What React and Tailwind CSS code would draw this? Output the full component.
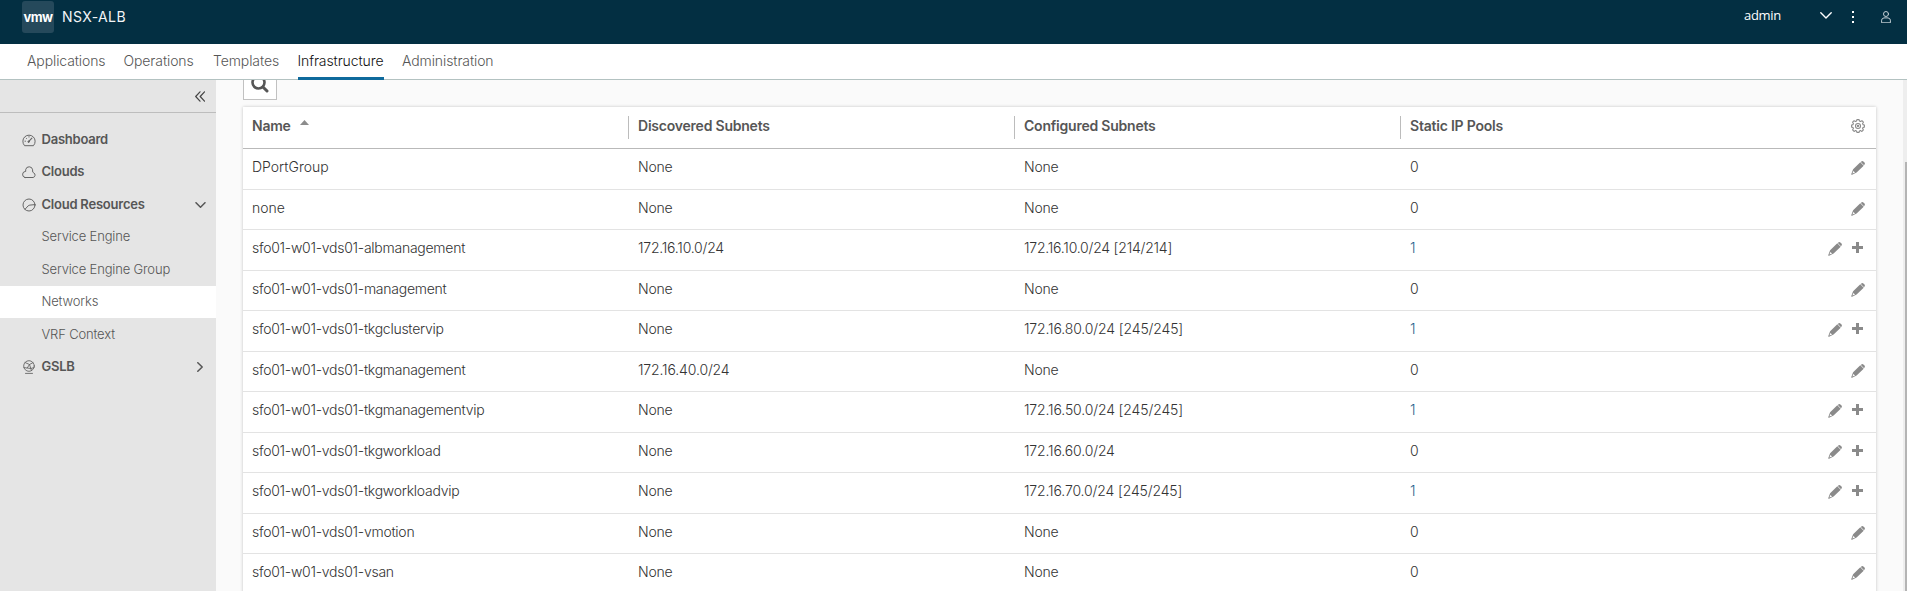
const NAV = [
  { label: 'Applications', width: 'w-[78px]' },
  { label: 'Operations', width: 'w-[71px]' },
  { label: 'Templates', width: 'w-[66px]' },
  { label: 'Infrastructure', width: 'w-[86px]', active: true },
  { label: 'Administration', width: 'w-[92px]' },
];

const ROWS = [
  ['DPortGroup', 'None', 'None', '0', false],
  ['none', 'None', 'None', '0', false],
  ['sfo01-w01-vds01-albmanagement', '172.16.10.0/24', '172.16.10.0/24 [214/214]', '1', true],
  ['sfo01-w01-vds01-management', 'None', 'None', '0', false],
  ['sfo01-w01-vds01-tkgclustervip', 'None', '172.16.80.0/24 [245/245]', '1', true],
  ['sfo01-w01-vds01-tkgmanagement', '172.16.40.0/24', 'None', '0', false],
  ['sfo01-w01-vds01-tkgmanagementvip', 'None', '172.16.50.0/24 [245/245]', '1', true],
  ['sfo01-w01-vds01-tkgworkload', 'None', '172.16.60.0/24', '0', true],
  ['sfo01-w01-vds01-tkgworkloadvip', 'None', '172.16.70.0/24 [245/245]', '1', true],
  ['sfo01-w01-vds01-vmotion', 'None', 'None', '0', false],
  ['sfo01-w01-vds01-vsan', 'None', 'None', '0', false],
];

const HEADERS = ['Discovered Subnets', 'Configured Subnets', 'Static IP Pools'];

function Stroke({ className, viewBox = '0 0 14 14', width = 1, children }) {
  return (
    <svg className={className} viewBox={viewBox} fill="none" stroke="currentColor" strokeWidth={width} strokeLinecap="round" strokeLinejoin="round">
      {children}
    </svg>
  );
}

const DashboardIcon = () => (
  <Stroke className="h-3.5 w-3.5">
    <path d="M2.3 12.4A6.2 6.2 0 1 1 11.7 12.4Z" />
    <path d="M6.6 8.7 9.9 5.2" strokeWidth="1.2" />
    <circle cx="6.6" cy="8.7" r="0.7" fill="currentColor" />
    <path d="M7 3.6v.5M3 8.2h.5M4.2 5.2l.3.3" />
  </Stroke>
);
const CloudIcon = () => (
  <Stroke className="h-3.5 w-3.5">
    <path d="M2.9 12.5H11.1A2.5 2.5 0 0 0 11.8 7.9 1.8 1.8 0 0 1 10.6 6V4.8A3.5 3.5 0 0 0 3.7 4.6V6.4A3.1 3.1 0 0 0 2.9 12.5Z" />
  </Stroke>
);
const ResourcesIcon = () => (
  <Stroke className="h-3.5 w-3.5">
    <circle cx="7" cy="7" r="6" />
    <path d="M3 11.3 6 8Q6.8 7.2 7.9 7.1L13 6.6" />
  </Stroke>
);
const GlobeIcon = () => (
  <Stroke className="h-3.5 w-3.5" width={0.9}>
    <circle cx="7" cy="6" r="5.3" />
    <path d="M3 2.5 7.5 4.5 11 2.6M7.5 4.5 8.8 8.5 5.2 8 2 7.6M8.8 8.5 12 7.6M5.2 8 7.5 4.5M8.8 8.5 9.5 10.6M3.5 13.4h7" />
  </Stroke>
);

function Pencil() {
  return (
    <svg className="h-3.5 w-3.5" viewBox="0 0 14 14" fill="#8a8a8a">
      <path d="M9.8 1 10.7.3Q11.6-.2 12.4.5L13.5 1.6Q14.2 2.4 13.7 3.3L13 4.2Z" />
      <path fillRule="evenodd" d="M9.3 1.3 12.7 4.7 5.6 11.6 1.1 13.8Q.1 14.1.3 13L2.1 8.3ZM2.4 9.9 1.4 12.6 4.1 11.6Z" />
    </svg>
  );
}
function Plus() {
  return (
    <svg className="h-[11px] w-[11px]" viewBox="0 0 11 11" fill="#8a8a8a">
      <path d="M4 0h3v4h4v3H7v4H4V7H0V4h4z" />
    </svg>
  );
}
function Gear() {
  return (
    <Stroke className="h-3.5 w-3.5 text-[#8a8a8a]" width={1.1}>
      <path d="M5.9.6h2.2l.4 1.5 1 .4 1.4-.8 1.5 1.5-.8 1.4.4 1 1.4.4v2.1l-1.4.4-.4 1 .8 1.4-1.5 1.5-1.4-.8-1 .4-.4 1.4H5.9l-.4-1.4-1-.4-1.4.8-1.5-1.5.8-1.4-.4-1L.6 8.1V6L2 5.6l.4-1-.8-1.4 1.5-1.5 1.4.8 1-.4z" />
      <circle cx="7" cy="7" r="2.5" />
      <circle cx="7" cy="7" r="0.6" />
    </Stroke>
  );
}

function SideGroup({ icon, label, children }) {
  return (
    <div className="flex h-[32.5px] items-center pl-[22px] pr-[10px] text-[#565656]">
      <span className="flex w-[19.5px] shrink-0 text-[#666]">{icon}</span>
      <span className="flex-1 font-semibold tracking-[-0.23px]">{label}</span>
      {children}
    </div>
  );
}
function SideItem({ label, active }) {
  return (
    <div className={`flex h-[32.5px] items-center pl-[41.5px] font-light tracking-[-0.16px] text-[#565656] ${active ? 'bg-white' : ''}`}>
      {label}
    </div>
  );
}

export default function App() {
  return (
    <div className="flex h-[591px] w-full flex-col overflow-hidden bg-[#fafafa] font-['Inter','Liberation_Sans',sans-serif] text-[14px]">
      <header className="flex h-11 shrink-0 items-start bg-[#032f42] text-white">
        <div className="ml-[22px] mt-px flex h-8 w-8 items-center justify-center rounded-[3px] bg-[#25495b]">
          <span className="text-[13px] font-bold leading-[30px] tracking-[-0.5px]">vmw</span>
        </div>
        <span className="ml-[8px] flex-1 leading-[34px] tracking-[0.4px] text-[#f2f5f7]">NSX-ALB</span>
        <span className="w-[76px] font-['Open_Sans',sans-serif] text-[13px] leading-[31px] tracking-[-0.3px]">admin</span>
        <Stroke className="mt-[12px] h-[7px] w-3" viewBox="0 0 12 7" width={1.4}>
          <path d="M.8.8 6 6 11.2.8" />
        </Stroke>
        <svg className="ml-5 mt-[11px] h-3 w-[2px]" viewBox="0 0 2 12" fill="#fff">
          <path d="M0 0h2v2H0zM0 5h2v2H0zM0 10h2v2H0z" />
        </svg>
        <Stroke className="ml-[27px] mr-[16px] mt-[11px] h-3 w-2.5 text-[#c3ced4]" viewBox="0 0 10 12">
          <circle cx="5" cy="3" r="2.5" />
          <path d="M.6 11.4V9.2Q.6 7.4 3 6.9H7Q9.4 7.4 9.4 9.2V11.4Z" />
        </Stroke>
      </header>

      <nav className="flex h-9 shrink-0 gap-[18.5px] border-b border-[#b3c2c1] bg-white pl-[27px]">
        {NAV.map((n) => (
          <div
            key={n.label}
            className={`${n.width} -mb-px h-9 whitespace-nowrap font-light leading-[34px] tracking-[-0.1px] ${n.active ? 'border-b-[3px] border-[#0f6a9c] text-[#111]' : 'text-[#565656]'}`}
          >
            {n.label}
          </div>
        ))}
      </nav>

      <div className="flex min-h-0 flex-1">
        <aside className="w-[216px] shrink-0 bg-[#e5e5e5] text-[13px]">
          <div className="flex h-[33px] items-center justify-end border-b border-[#bdbdbd] pr-[11px] text-[#444]">
            <Stroke className="h-[11px] w-[10px]" viewBox="0 0 10 11" width={1.2}>
              <path d="M5 .8.7 5.5 5 10.2M9.5.8 5.2 5.5 9.5 10.2" />
            </Stroke>
          </div>
          <div className="pt-[10.3px]">
            <SideGroup icon={<DashboardIcon />} label="Dashboard" />
            <SideGroup icon={<CloudIcon />} label="Clouds" />
            <SideGroup icon={<ResourcesIcon />} label="Cloud Resources">
              <Stroke className="h-1.5 w-[11px]" viewBox="0 0 11 6" width={1.5}>
                <path d="M1 .7 5.5 5.2 10 .7" />
              </Stroke>
            </SideGroup>
            <SideItem label="Service Engine" />
            <SideItem label="Service Engine Group" />
            <SideItem label="Networks" active />
            <SideItem label="VRF Context" />
            <SideGroup icon={<GlobeIcon />} label="GSLB">
              <Stroke className="mr-[3px] h-2.5 w-1.5" viewBox="0 0 6 10" width={1.5}>
                <path d="M.8.7 5.2 5 .8 9.3" />
              </Stroke>
            </SideGroup>
          </div>
        </aside>

        <main className="flex min-w-0 flex-1 flex-col overflow-hidden pl-[27px] pr-[27px]">
          <div className="flex h-5 w-[34px] shrink-0 justify-center overflow-hidden border border-t-0 border-[#c1c1c1] bg-white">
            <svg className="-mt-[5px] h-[18px] w-[18px] shrink-0" viewBox="0 0 18 18" fill="none" stroke="#565656">
              <circle cx="7.5" cy="7.5" r="6" strokeWidth="2.6" />
              <path d="M12.2 12.2 16 16" strokeWidth="3" strokeLinecap="round" />
            </svg>
          </div>
          <section className="mt-[7px] w-[1633px] shrink-0 bg-white shadow-[0_0_3px_rgba(0,0,0,0.22)]">
            <div className="grid h-[42px] grid-cols-[385px_386px_386px_1fr] border-b border-[#b9b9b9] pt-[9px] font-semibold leading-5 tracking-[-0.22px] text-[#565656]">
              <div className="flex pl-[9px]">
                Name
                <svg className="ml-[9px] mt-[4px] h-[5px] w-[9px]" viewBox="0 0 9 5" fill="#8c8c8c">
                  <path d="M0 5 4.5 0 9 5z" />
                </svg>
              </div>
              {HEADERS.map((h, i) => (
                <div key={h} className="flex h-[23px] border-l border-[#bcbcbc] pl-[9px]">
                  <span className="flex-1">{h}</span>
                  {i === 2 && (
                    <span className="mr-[11px] mt-[3px]">
                      <Gear />
                    </span>
                  )}
                </div>
              ))}
            </div>
            {ROWS.map(([name, found, set, pools, add], i) => (
              <div
                key={name}
                className={`grid grid-cols-[385px_386px_386px_1fr] border-b border-[#e3e3e3] pt-[8px] font-light leading-5 text-[#333] ${i % 2 ? 'h-[40px]' : 'h-[41px]'}`}
              >
                <span className={`pl-[9px] ${i < 2 ? 'tracking-[0px]' : 'tracking-[-0.26px]'}`}>{name}</span>
                <span className={`pl-[10px] ${i === 2 || found === 'None' ? 'tracking-[-0.22px]' : 'tracking-[-0.14px]'}`}>{found}</span>
                <span className={`pl-[10px] ${i === 2 || set === 'None' ? 'tracking-[-0.22px]' : 'tracking-[-0.14px]'}`}>{set}</span>
                <span className="flex pl-[10px]">
                  <span className={`flex-1 ${pools === '1' ? 'text-[#1f5f8b]' : ''}`}>{pools}</span>
                  <span className="mr-[11px] mt-[4px] flex gap-[10px]">
                    <Pencil />
                    {add && (
                      <span className="mr-[2px]">
                        <Plus />
                      </span>
                    )}
                  </span>
                </span>
              </div>
            ))}
          </section>
        </main>
        <div className="flex w-1 shrink-0 justify-end bg-[#eeeeee] pt-[82px]">
          <div className="w-[2px] bg-[#b4b4b4]" />
        </div>
      </div>
    </div>
  );
}
